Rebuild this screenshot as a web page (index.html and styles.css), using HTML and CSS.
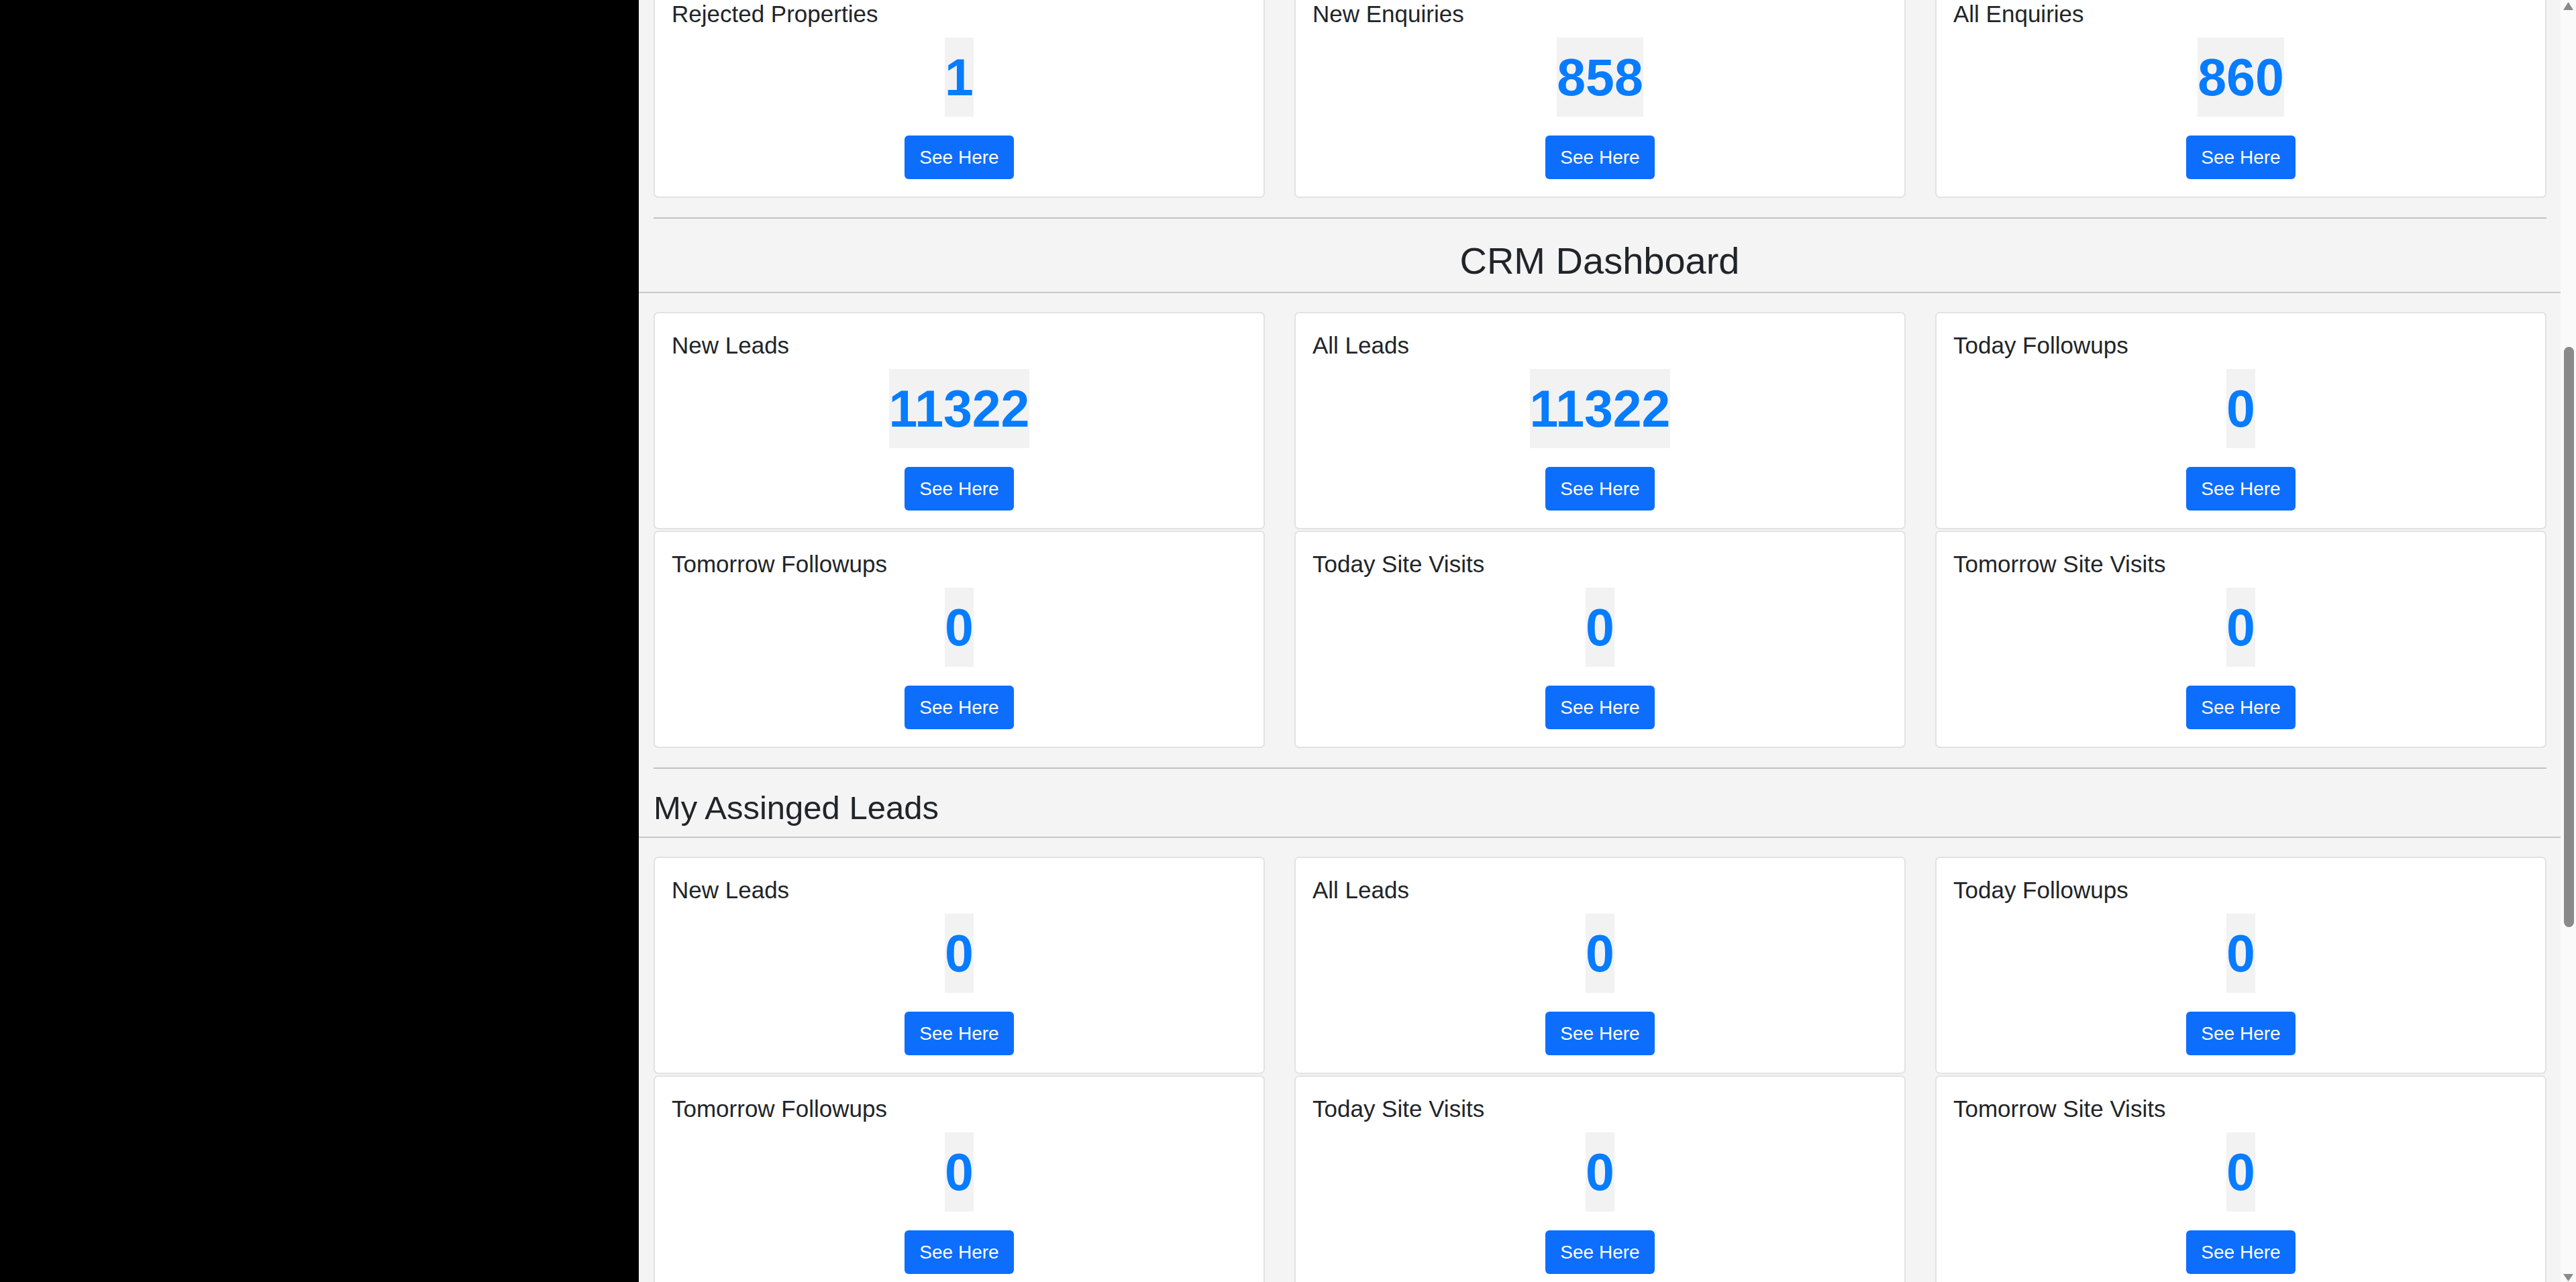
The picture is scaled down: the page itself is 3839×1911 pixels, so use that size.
FILE: index.html
```html
<!DOCTYPE html>
<html lang="en">
<head>
<meta charset="utf-8">
<title>Dashboard</title>
<link rel="stylesheet" href="styles.css">
</head>
<body>
<div class="layout">
  <aside class="sidebar"></aside>
  <main class="main">
    <div class="scroll-content">
      <div class="container">
        <div class="card-grid">
          <div class="card"><div class="card-title">Rejected Properties</div><div class="count-wrap"><span class="count">1</span></div><div class="btn-wrap"><a class="btn">See Here</a></div></div>
          <div class="card"><div class="card-title">New Enquiries</div><div class="count-wrap"><span class="count">858</span></div><div class="btn-wrap"><a class="btn">See Here</a></div></div>
          <div class="card"><div class="card-title">All Enquiries</div><div class="count-wrap"><span class="count">860</span></div><div class="btn-wrap"><a class="btn">See Here</a></div></div>
        </div>
        <hr class="divider">
      </div>

      <h2 class="section-head section-head-center">CRM Dashboard</h2>

      <div class="container">
        <div class="card-grid">
          <div class="card"><div class="card-title">New Leads</div><div class="count-wrap"><span class="count">11322</span></div><div class="btn-wrap"><a class="btn">See Here</a></div></div>
          <div class="card"><div class="card-title">All Leads</div><div class="count-wrap"><span class="count">11322</span></div><div class="btn-wrap"><a class="btn">See Here</a></div></div>
          <div class="card"><div class="card-title">Today Followups</div><div class="count-wrap"><span class="count">0</span></div><div class="btn-wrap"><a class="btn">See Here</a></div></div>
          <div class="card"><div class="card-title">Tomorrow Followups</div><div class="count-wrap"><span class="count">0</span></div><div class="btn-wrap"><a class="btn">See Here</a></div></div>
          <div class="card"><div class="card-title">Today Site Visits</div><div class="count-wrap"><span class="count">0</span></div><div class="btn-wrap"><a class="btn">See Here</a></div></div>
          <div class="card"><div class="card-title">Tomorrow Site Visits</div><div class="count-wrap"><span class="count">0</span></div><div class="btn-wrap"><a class="btn">See Here</a></div></div>
        </div>
        <hr class="divider">
      </div>

      <h2 class="section-head section-head-left">My Assinged Leads</h2>

      <div class="container">
        <div class="card-grid">
          <div class="card"><div class="card-title">New Leads</div><div class="count-wrap"><span class="count">0</span></div><div class="btn-wrap"><a class="btn">See Here</a></div></div>
          <div class="card"><div class="card-title">All Leads</div><div class="count-wrap"><span class="count">0</span></div><div class="btn-wrap"><a class="btn">See Here</a></div></div>
          <div class="card"><div class="card-title">Today Followups</div><div class="count-wrap"><span class="count">0</span></div><div class="btn-wrap"><a class="btn">See Here</a></div></div>
          <div class="card"><div class="card-title">Tomorrow Followups</div><div class="count-wrap"><span class="count">0</span></div><div class="btn-wrap"><a class="btn">See Here</a></div></div>
          <div class="card"><div class="card-title">Today Site Visits</div><div class="count-wrap"><span class="count">0</span></div><div class="btn-wrap"><a class="btn">See Here</a></div></div>
          <div class="card"><div class="card-title">Tomorrow Site Visits</div><div class="count-wrap"><span class="count">0</span></div><div class="btn-wrap"><a class="btn">See Here</a></div></div>
        </div>
      </div>
    </div>
  </main>
  <div class="scrollbar">
    <svg class="sb-arrow" width="23" height="18" viewBox="0 0 23 18"><polygon points="4,15 11.5,3 19,15" fill="#8a8a8a"/></svg>
    <div class="sb-thumb"></div>
    <svg class="sb-arrow sb-arrow-down" width="23" height="14" viewBox="0 0 23 14"><polygon points="4,2 19,2 11.5,13" fill="#8a8a8a"/></svg>
  </div>
</div>
</body>
</html>
```
FILE: styles.css
```css
html, body {
  margin: 0;
  padding: 0;
  height: 100%;
  overflow: hidden;
}

body {
  font-family: "Liberation Sans", Arial, Helvetica, sans-serif;
  color: #212529;
  background: #000;
}

.layout {
  display: flex;
  height: 1911px;
  width: 100%;
}

.sidebar {
  width: 952px;
  flex: 0 0 952px;
  background: #000;
}

.main {
  flex: 1 1 auto;
  background: #f4f4f4;
  overflow: hidden;
}

.scroll-content {
  margin-top: -29px;
}

.container {
  padding: 0 21px 0 22px;
}

.card-grid {
  display: grid;
  grid-template-columns: repeat(3, 1fr);
  column-gap: 44px;
  row-gap: 2px;
}

.card {
  background: #fff;
  border: 2px solid #e2e2e2;
  border-radius: 7px;
  padding: 22px 25px 26px;
  display: flex;
  flex-direction: column;
}

.card-title {
  font-size: 35px;
  line-height: 52px;
  height: 52px;
  white-space: nowrap;
}

.count-wrap {
  margin-top: 9px;
  text-align: center;
  height: 118px;
}

.count {
  display: inline-block;
  background: #f2f2f2;
  color: #077cff;
  font-weight: bold;
  font-size: 77px;
  line-height: 118px;
  height: 118px;
}

.btn-wrap {
  margin-top: 28px;
  text-align: center;
  height: 65px;
}

.btn {
  display: inline-block;
  background: #0d6efd;
  color: #fff;
  font-size: 28px;
  line-height: 65px;
  height: 65px;
  padding: 0 22px;
  border-radius: 6px;
  text-decoration: none;
}

.divider {
  margin: 29px 0 0;
  border: 0;
  border-top: 2px solid #c2c2c2;
  height: 0;
}

.section-head {
  margin: 0;
  font-weight: normal;
  line-height: 1.2;
  padding: 29px 22px 13px;
  border-bottom: 2px solid #c8c8c8;
  margin-bottom: 28px;
}

.section-head-center {
  font-size: 56px;
  text-align: center;
}

.section-head-left {
  font-size: 49px;
  text-align: left;
}

.scrollbar {
  width: 23px;
  flex: 0 0 23px;
  background: #fafafa;
  display: flex;
  flex-direction: column;
}

.sb-arrow {
  display: block;
  flex: 0 0 auto;
}

.sb-thumb {
  margin-top: 499px;
  margin-left: 5px;
  width: 15px;
  height: 865px;
  border-radius: 8px;
  background: #8a8a8a;
}

.sb-arrow-down {
  margin-top: auto;
}
```
